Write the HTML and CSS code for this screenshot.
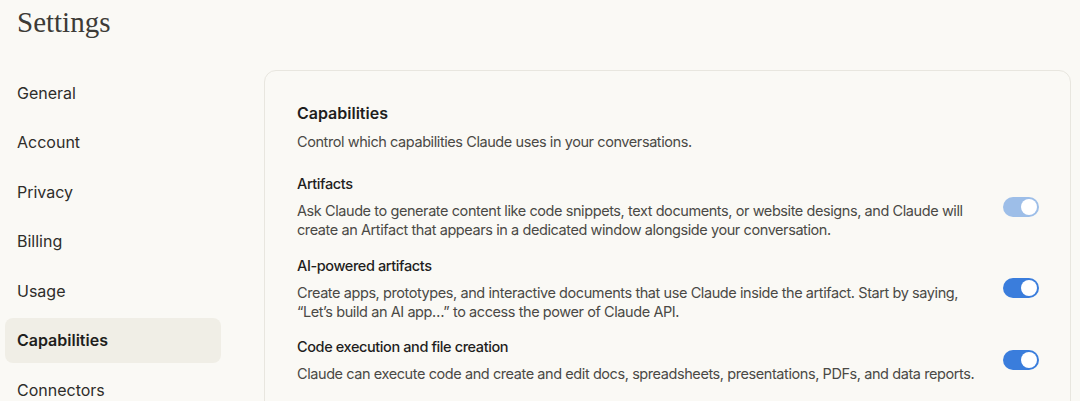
FILE: index.html
```html
<!DOCTYPE html>
<html lang="en">
<head>
<meta charset="utf-8">
<title>Settings</title>
<link rel="stylesheet" href="styles.css">
</head>
<body>
<div class="page">
  <h1 class="page-title">Settings</h1>
  <div class="layout">
    <nav class="sidenav">
      <a class="nav-item">General</a>
      <a class="nav-item">Account</a>
      <a class="nav-item">Privacy</a>
      <a class="nav-item">Billing</a>
      <a class="nav-item">Usage</a>
      <a class="nav-item active">Capabilities</a>
      <a class="nav-item">Connectors</a>
    </nav>
    <main class="card">
      <h2 class="card-title">Capabilities</h2>
      <p class="card-desc">Control which capabilities Claude uses in your conversations.</p>
      <div class="rows">
        <div class="row">
          <div class="row-text">
            <h3 class="row-title">Artifacts</h3>
            <p class="row-desc">Ask Claude to generate content like code snippets, text documents, or website designs, and Claude will<br>create an Artifact that appears in a dedicated window alongside your conversation.</p>
          </div>
          <span class="toggle on disabled"><span class="knob"></span></span>
        </div>
        <div class="row">
          <div class="row-text">
            <h3 class="row-title">AI-powered artifacts</h3>
            <p class="row-desc">Create apps, prototypes, and interactive documents that use Claude inside the artifact. Start by saying,<br>“Let’s build an AI app…” to access the power of Claude API.</p>
          </div>
          <span class="toggle on"><span class="knob"></span></span>
        </div>
        <div class="row">
          <div class="row-text">
            <h3 class="row-title">Code execution and file creation</h3>
            <p class="row-desc">Claude can execute code and create and edit docs, spreadsheets, presentations, PDFs, and data reports.</p>
          </div>
          <span class="toggle on"><span class="knob"></span></span>
        </div>
      </div>
    </main>
  </div>
</div>
</body>
</html>
```
FILE: styles.css
```css
* { box-sizing: border-box; }
html, body { margin: 0; padding: 0; }
body {
  background: #faf9f5;
  font-family: Inter, "Noto Sans", sans-serif;
  color: #3d3d3a;
  overflow: hidden;
}
.page {
  padding: 0 9px 0 5px;
}
.page-title {
  margin: 0;
  padding-left: 12px;
  font-family: "Liberation Serif", serif;
  font-weight: 400;
  font-size: 29px;
  line-height: 44px;
  color: #3d3b37;
  height: 70px;
}
.layout {
  display: grid;
  grid-template-columns: 216px 1fr;
  column-gap: 43px;
  align-items: start;
}
.sidenav {
  display: flex;
  flex-direction: column;
  gap: 4.5px;
}
.nav-item {
  display: flex;
  align-items: center;
  height: 45px;
  padding: 0 12px;
  border-radius: 8px;
  font-size: 16px;
  color: #2e2d2a;
  cursor: pointer;
}
.nav-item.active {
  background: #f0eee6;
  font-weight: 600;
  color: #1f1e1d;
}
.card {
  border: 1px solid #e8e6df;
  border-radius: 12px;
  padding: 30px 31px 40px 32px;
  min-height: 400px;
}
.card-title {
  margin: 0;
  font-size: 16px;
  font-weight: 600;
  line-height: 24px;
  color: #1f1e1d;
}
.card-desc {
  margin: 7px 0 0;
  font-size: 14.5px;
  line-height: 20px;
  letter-spacing: -0.42px;
  color: #4a4945;
}
.rows {
  display: flex;
  flex-direction: column;
  gap: 16.5px;
  margin-top: 22px;
}
.row {
  display: flex;
  align-items: center;
  gap: 16px;
}
.row-text { flex: 1; min-width: 0; }
.row-title {
  margin: 0;
  font-size: 14.5px;
  font-weight: 500;
  line-height: 20px;
  letter-spacing: -0.4px;
  color: #1f1e1d;
}
.row-desc {
  margin: 7px 0 0;
  font-size: 14.5px;
  line-height: 19px;
  letter-spacing: -0.42px;
  color: #4a4945;
}
.toggle {
  flex: none;
  position: relative;
  width: 36px;
  height: 20px;
  border-radius: 10px;
  background: #3a7ddc;
}
.toggle.disabled { background: #9dbee8; }
.knob {
  position: absolute;
  top: 2px;
  right: 2px;
  width: 16px;
  height: 16px;
  border-radius: 50%;
  background: #fff;
}
```
